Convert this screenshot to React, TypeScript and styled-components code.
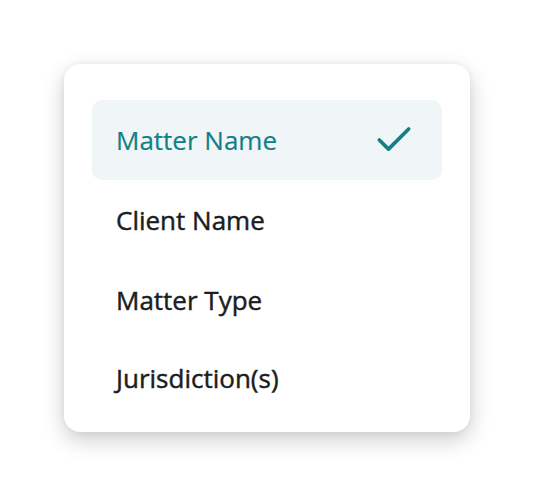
import React, { FC, useState } from 'react'
import styled, { createGlobalStyle } from 'styled-components'

const GlobalStyle = createGlobalStyle`
  html, body {
    margin: 0;
    padding: 0;
    background: #ffffff;
  }
  body {
    font-family: "Open Sans", Lato, "Liberation Sans", sans-serif;
  }
`;

const Page = styled.div`
  width: 534px;
  height: 496px;
  padding: 64px 0 0 64px;
  box-sizing: border-box;
`;

const Menu = styled.ul`
  list-style: none;
  margin: 0;
  width: 406px;
  height: 368px;
  box-sizing: border-box;
  padding: 36px 28px 12px;
  background: #ffffff;
  border-radius: 16px;
  box-shadow: 0 8px 22px rgba(0, 0, 0, 0.2), 0 0 6px rgba(0, 0, 0, 0.06);
  display: flex;
  flex-direction: column;
`;

const Item = styled.li<{ $selected: boolean }>`
  height: 80px;
  flex-shrink: 0;
  display: flex;
  align-items: center;
  justify-content: space-between;
  padding: 0 26px 0 24px;
  border-radius: 10px;
  cursor: pointer;
  font-size: 26px;
  font-weight: 400;
  -webkit-text-stroke: ${p => (p.$selected ? '0.2px' : '0.45px')} currentColor;
  color: ${p => (p.$selected ? '#137f87' : '#1b1d21')};
  background: ${p => (p.$selected ? '#f0f6f7' : 'transparent')};

  &:last-child {
    height: 76px;
  }
`;

const Check = styled.svg`
  width: 44px;
  height: 44px;
  flex-shrink: 0;
`;

const options = ['Matter Name', 'Client Name', 'Matter Type', 'Jurisdiction(s)'];

const App: FC = () => {
  const [selected, setSelected] = useState('Matter Name');

  return (
    <Page>
      <GlobalStyle />
      <Menu>
        {options.map(opt => (
          <Item key={opt} $selected={opt === selected} onClick={() => setSelected(opt)}>
            {opt}
            {opt === selected && (
              <Check viewBox="0 0 24 24" fill="none" stroke="#137f87" strokeWidth={2} strokeLinecap="round" strokeLinejoin="round">
                <path d="M20 6 9 17l-5-5" />
              </Check>
            )}
          </Item>
        ))}
      </Menu>
    </Page>
  )
}

export default App
